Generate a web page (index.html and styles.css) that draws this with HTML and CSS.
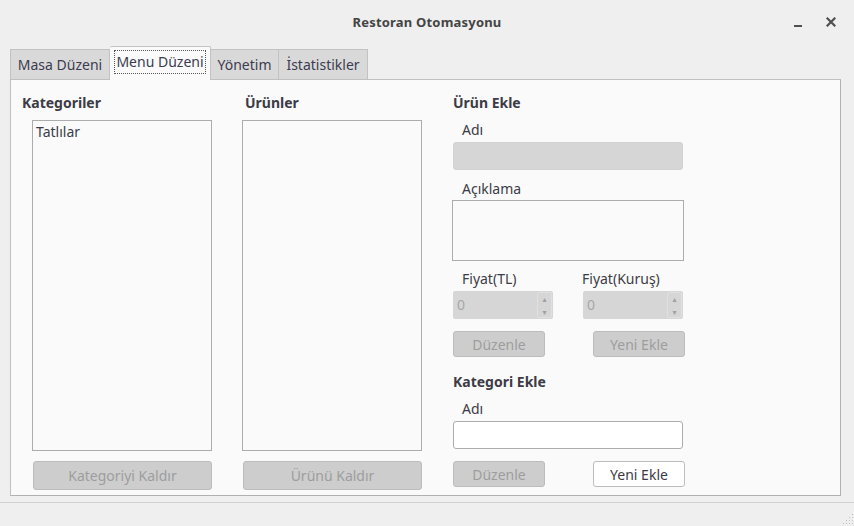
FILE: index.html
```html
<!DOCTYPE html>
<html>
<head>
<meta charset="utf-8">
<link rel="stylesheet" href="styles.css">
</head>
<body>
<div class="window">
  <header class="titlebar">
    <div class="title">Restoran Otomasyonu</div>
    <div class="controls">
      <span class="ctl-min"></span>
      <svg class="ctl-close" width="10" height="10" viewBox="0 0 10 10"><path d="M1.5 1.5 L8.5 8.5 M8.5 1.5 L1.5 8.5" stroke="#505050" stroke-width="2.2" stroke-linecap="square"/></svg>
    </div>
  </header>
  <nav class="tabs">
    <div class="tab">Masa Düzeni</div>
    <div class="tab active"><span class="focus">Menu Düzeni</span></div>
    <div class="tab">Yönetim</div>
    <div class="tab">İstatistikler</div>
  </nav>
  <main class="panel">
    <section class="col col-list">
      <h2 class="heading">Kategoriler</h2>
      <div class="listbox"><div class="item">Tatlılar</div></div>
      <button class="btn disabled wide">Kategoriyi Kaldır</button>
    </section>
    <section class="col col-list col-2">
      <h2 class="heading">Ürünler</h2>
      <div class="listbox"></div>
      <button class="btn disabled wide">Ürünü Kaldır</button>
    </section>
    <section class="col col-form">
      <h2 class="heading">Ürün Ekle</h2>
      <label class="lbl">Adı</label>
      <div class="input disabled-input"></div>
      <label class="lbl lbl-gap">Açıklama</label>
      <div class="textarea"></div>
      <div class="row price-labels">
        <label class="lbl">Fiyat(TL)</label>
        <label class="lbl">Fiyat(Kuruş)</label>
      </div>
      <div class="row spins">
        <div class="spin"><span class="spin-val">0</span><span class="spin-arrows"><span>▴</span><span>▾</span></span></div>
        <div class="spin"><span class="spin-val">0</span><span class="spin-arrows"><span>▴</span><span>▾</span></span></div>
      </div>
      <div class="row btns">
        <button class="btn disabled small">Düzenle</button>
        <button class="btn disabled small">Yeni Ekle</button>
      </div>
      <h2 class="heading heading-2">Kategori Ekle</h2>
      <label class="lbl">Adı</label>
      <div class="input"></div>
      <div class="row btns">
        <button class="btn disabled small">Düzenle</button>
        <button class="btn small">Yeni Ekle</button>
      </div>
    </section>
  </main>
  <footer class="status">
    <svg class="grip" width="12" height="12" viewBox="0 0 12 12" fill="#c4c4c4">
      <rect x="10" y="1" width="1" height="1"/>
      <rect x="7" y="4" width="1" height="1"/><rect x="10" y="4" width="1" height="1"/>
      <rect x="4" y="7" width="1" height="1"/><rect x="7" y="7" width="1" height="1"/><rect x="10" y="7" width="1" height="1"/>
      <rect x="1" y="10" width="1" height="1"/><rect x="4" y="10" width="1" height="1"/><rect x="7" y="10" width="1" height="1"/><rect x="10" y="10" width="1" height="1"/>
    </svg>
  </footer>
</div>
</body>
</html>
```
FILE: styles.css
```css
* { box-sizing: border-box; }
html, body { margin: 0; padding: 0; }
body {
  background: #efefef;
  font-family: "Noto Sans", "DejaVu Sans", sans-serif;
  font-size: 14px;
  color: #3c3c46;
  width: 854px;
  height: 526px;
  overflow: hidden;
}
.window { width: 854px; height: 526px; display: flex; flex-direction: column; }

.titlebar {
  height: 46px;
  display: flex;
  align-items: center;
  justify-content: center;
  position: relative;
}
.title {
  font-weight: bold;
  font-size: 13px;
  color: #444444;
  letter-spacing: 0.2px;
  margin-top: -2px;
}
.controls {
  position: absolute;
  right: 18px;
  top: 17px;
  display: flex;
  align-items: center;
  gap: 24px;
}
.ctl-min { display: block; width: 8px; height: 2px; background: #505050; margin-top: 8px; }
.ctl-close { display: block; }

.tabs {
  height: 33px;
  display: flex;
  align-items: flex-end;
  padding-left: 10px;
  position: relative;
  z-index: 2;
}
.tab {
  height: 30px;
  padding: 0;
  background: #d9d9d9;
  border: 1px solid #c2c2c2;
  border-bottom: none;
  border-left: none;
  display: flex;
  align-items: center;
  justify-content: center;
  white-space: nowrap;
  font-size: 14px;
  color: #3c3c50;
}
.tab:first-child { border-left: 1px solid #c2c2c2; width: 100px; }
.tab.active {
  height: 34px;
  margin-bottom: -1px;
  background: #fafafa;
  border-left: none;
  padding: 0 0 3px 0;
  width: 101px;
  border-radius: 2px 2px 0 0;
}
.focus {
  border: 1px dotted #555;
  padding: 1px 1px;
  line-height: 20px;
}
.tab:nth-child(3) { width: 68px; }
.tab:nth-child(4) { width: 89px; }

.panel {
  margin: 0 13px 0 10px;
  height: 417px;
  background: #fafafa;
  border: 1px solid #c0c0c0;
  border-right-color: #b0b0b0;
  border-bottom-color: #b0b0b0;
  display: flex;
  padding: 13px 0 0 11px;
}
.col { display: flex; flex-direction: column; }
.col-list { width: 220px; }
.col-2 { width: 210px; }
.heading {
  margin: 0;
  font-size: 14px;
  font-weight: bold;
  line-height: 20px;
  height: 20px;
  color: #3c3c46;
}
.col-2 .heading { padding-left: 3px; }
.listbox {
  margin: 7px 0 0 10px;
  width: 180px;
  height: 331px;
  border: 1px solid #acacac;
  background: #fafafa;
  padding: 0 3px;
}
.col-2 .listbox { margin-left: 0; }
.item { line-height: 20px; margin-top: 1px; }
.btn {
  font-family: inherit;
  font-size: 14px;
  border-radius: 3px;
  border: 1px solid #bcbcbc;
  background: #ffffff;
  color: #3c3c46;
  padding: 0;
  margin: 0;
}
.btn.disabled { background: #cdcdcd; color: #9d9d9d; border-color: #bcbcbc; }
.btn.wide { margin: 10px 0 0 11px; width: 179px; height: 29px; }
.col-2 .btn.wide { margin-left: 1px; }

.col-form { width: 260px; }
.lbl { display: block; line-height: 18px; height: 18px; padding-left: 10px; margin-top: 1px; }
.col-form > .heading + .lbl { margin-top: 8px; }
.input {
  margin: 3px 0 0 1px;
  width: 230px;
  height: 28px;
  border: 1px solid #acacac;
  border-radius: 3px;
  background: #ffffff;
}
.input.disabled-input { background: #d6d6d6; border-color: #d2d2d2; }
.lbl-gap { margin-top: 10px; }
.textarea {
  margin-top: 2px;
  width: 232px;
  height: 61px;
  border: 1px solid #acacac;
  background: #fafafa;
}
.row { display: flex; }
.price-labels { margin-top: 9px; }
.price-labels .lbl:first-child { width: 120px; }
.price-labels .lbl { margin-top: 0; }
.spins { margin-top: 3px; padding-left: 1px; gap: 30px; }
.spin {
  width: 100px;
  height: 28px;
  background: #d6d6d6;
  display: flex;
  align-items: stretch;
  border-radius: 2px;
}
.spin-val { flex: 1; color: #a8a8a8; padding-left: 4px; line-height: 28px; }
.spin-arrows {
  width: 15px;
  margin: 1px 1px 1px 0;
  border: 1px solid #e0e0e0;
  border-radius: 2px;
  display: flex;
  flex-direction: column;
  align-items: center;
  justify-content: space-between;
  font-size: 8px;
  line-height: 11px;
  color: #a0a0a0;
}
.btns { margin-top: 12px; padding-left: 1px; gap: 48px; }
.btn.small { width: 92px; height: 26px; }
.heading-2 { margin-top: 15px; padding-left: 1px; }
.col-form > .heading { padding-left: 1px; }
.heading-2 + .lbl { margin-top: 9px; }

.status {
  margin-top: 6px;
  flex: 1;
  border-top: 1px solid #d2d2d2;
  position: relative;
}
.grip { position: absolute; right: 0; bottom: 1px; }
```
